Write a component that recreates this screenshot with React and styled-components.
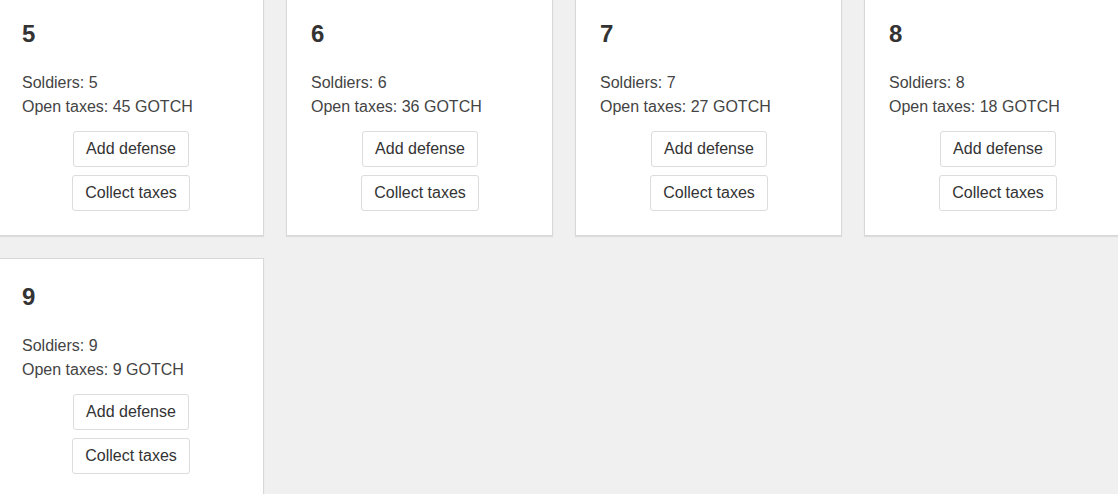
import React from 'react';
import styled, { createGlobalStyle } from 'styled-components';

const GlobalStyle = createGlobalStyle`
  html, body {
    margin: 0;
    padding: 0;
    background: #eff0ef;
    font-family: "Liberation Sans", Arial, sans-serif;
    color: #333;
    overflow: hidden;
  }
`;

const Grid = styled.div`
  display: grid;
  grid-template-columns: repeat(4, 267px);
  gap: 22px;
  margin: -5px 0 0 -3px;
`;

const Card = styled.div`
  background: #fff;
  border: 1px solid #d8d8d8;
  box-shadow: 0 1px 1px rgba(0, 0, 0, 0.08);
  padding: 23px 23px 24px 24px;
  box-sizing: border-box;
  height: 241px;
`;

const Title = styled.h3`
  margin: 0 0 23px;
  font-size: 24px;
  line-height: 29px;
  font-weight: bold;
  color: #333;
`;

const Line = styled.p`
  margin: 0;
  font-size: 16px;
  line-height: 24px;
  color: #444;
`;

const Actions = styled.div`
  display: flex;
  flex-direction: column;
  align-items: center;
  gap: 8px;
  margin-top: 12px;
`;

const Button = styled.button`
  font-family: inherit;
  font-size: 16px;
  line-height: 22px;
  color: #333;
  background: #fff;
  border: 1px solid #dcdcdc;
  border-radius: 3px;
  padding: 6px 12px;
  cursor: pointer;
`;

const castles = [
  { id: 5, soldiers: 5, taxes: 45 },
  { id: 6, soldiers: 6, taxes: 36 },
  { id: 7, soldiers: 7, taxes: 27 },
  { id: 8, soldiers: 8, taxes: 18 },
  { id: 9, soldiers: 9, taxes: 9 },
];

const App = () => (
  <>
    <GlobalStyle />
    <Grid>
      {castles.map((c) => (
        <Card key={c.id}>
          <Title>{c.id}</Title>
          <Line>Soldiers: {c.soldiers}</Line>
          <Line>Open taxes: {c.taxes} GOTCH</Line>
          <Actions>
            <Button>Add defense</Button>
            <Button>Collect taxes</Button>
          </Actions>
        </Card>
      ))}
    </Grid>
  </>
);

export default App;
